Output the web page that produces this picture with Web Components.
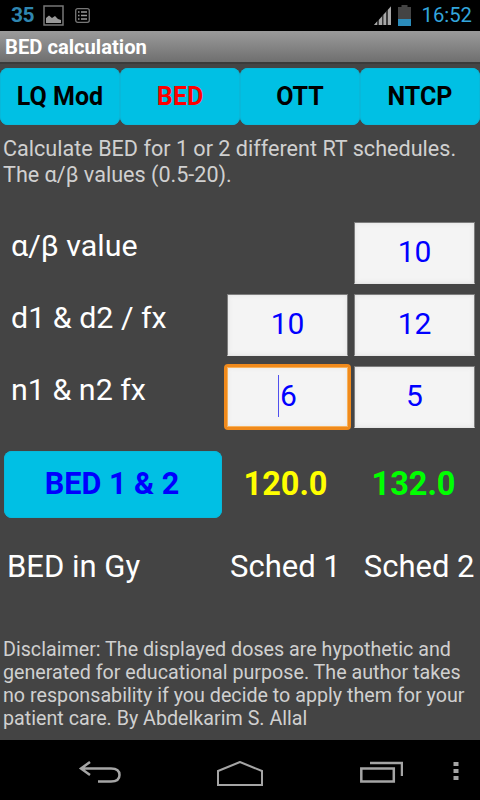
<!DOCTYPE html>
<html>
<head>
<meta charset="utf-8">
<title>BED calculation</title>
<style>
  html, body { margin: 0; padding: 0; background: #444; }
  body { width: 480px; height: 800px; overflow: hidden; font-family: Roboto, sans-serif; }
  bed-app { display: flex; flex-direction: column; height: 800px; }
</style>
</head>
<body>
<bed-app></bed-app>

<script>
class StatusBar extends HTMLElement {
  constructor() {
    super();
    this.attachShadow({mode: 'open'}).innerHTML = `
<style>
  :host { display: flex; height: 31px; background: #000; align-items: center; padding: 0 8px 0 11px; box-sizing: border-box; }
  .count { color: #2f86b0; font: 700 21px/31px Roboto, sans-serif; letter-spacing: -.6px; width: 32px; }
  .time { color: #33a5dc; font: 400 20.3px/31px Roboto, sans-serif; margin-left: 10px; }
  svg { display: block; }
  .notes { margin-left: 11px; }
  .spacer { flex: 1; }
</style>
<span class="count">35</span>
<svg class="pic" width="21" height="21" viewBox="0 0 21 21">
  <rect x="1" y="1" width="19" height="19" fill="none" stroke="#777" stroke-width="1.5"/>
  <path d="M3 18V13L6 10.5 9 13 12 11 15 14 18 15V18Z" fill="#999"/>
</svg>
<svg class="notes" width="15" height="15" viewBox="0 0 15 15">
  <rect x=".7" y=".7" width="13.6" height="13.6" rx="2" fill="none" stroke="#777" stroke-width="1.3"/>
  <path d="M3 4H4.5M6 4H12M3 7.5H4.5M6 7.5H12M3 11H4.5M6 11H12" stroke="#999" stroke-width="1.4"/>
</svg>
<span class="spacer"></span>
<svg width="19" height="21" viewBox="0 0 19 21">
  <path d="M1 20L18 1V20Z" fill="#3a3a3a"/>
  <path d="M1 20L4 16.6V20ZM6 20V14.8L9 11.5V20ZM10.5 20V9.8L13 7V20ZM15 20V4.8L18 1.5V20Z" fill="#a8a8a8"/>
</svg>
<svg class="bat" width="13" height="21" viewBox="0 0 13 21" style="margin-left:6px">
  <rect x="3.5" y="0" width="6" height="2" fill="#444"/>
  <rect x="0" y="2" width="13" height="12" fill="#444"/>
  <rect x="0" y="14" width="13" height="7" fill="#33a5dc" opacity=".85"/>
</svg>
<span class="time">16:52</span>
`;
  }
}

class TitleBar extends HTMLElement {
  constructor() {
    super();
    this.attachShadow({mode: 'open'}).innerHTML = `
<style>
  :host { display: block; height: 31px; padding-left: 5px; background: linear-gradient(#9b9b9b, #6f6f6f); border-bottom: 2px solid #3a3a3a;
    color: #fff; font: 700 20.2px/32px Roboto, sans-serif; white-space: nowrap; }
</style>
<slot></slot>
`;
  }
}

class TabButton extends HTMLElement {
  constructor() {
    super();
    this.attachShadow({mode: 'open'}).innerHTML = `
<style>
  :host { display: flex; flex: 1; height: 57px; align-items: center; justify-content: center; background: #00c0e4; border-radius: 8px;
    box-shadow: inset 0 0 0 1px #08b8da; color: #000; font: 700 25px/1 Roboto, sans-serif; }
  :host([active]) { color: #f00; }
  :host([wide]) { flex: none; width: 218px; height: 67px; padding: 0 2px 1px 0; box-sizing: border-box; color: #00f; font-size: 30.6px; }
</style>
<slot></slot>
`;
  }
}

class NumField extends HTMLElement {
  constructor() {
    super();
    this.attachShadow({mode: 'open'}).innerHTML = `
<style>
  :host { display: flex; box-sizing: border-box; width: 121px; height: 62px; padding-bottom: 2px; align-items: center; justify-content: center; background: #f4f4f4;
    border: 1px solid #7d7d7d; border-bottom-color: #e6e6e6; box-shadow: inset 0 0 5px #e2e2e2; color: #00f; font: 400 30px/1 Roboto, sans-serif; }
  :host([focused]) { width: 127px; height: 66px; margin: -2px -3px; border: 3px solid #f08a1c; border-radius: 4px; box-shadow: inset 0 0 0 1px #f7b25c, inset 0 0 5px #e2e2e2; }
  .caret { display: none; width: 1px; height: 42px; margin-right: 1px; background: #5050ee; }
  :host([focused]) .caret { display: block; }
</style>
<span class="caret"></span><slot></slot>
`;
  }
}

class InputRow extends HTMLElement {
  constructor() {
    super();
    this.attachShadow({mode: 'open'}).innerHTML = `
<style>
  :host { display: grid; grid-template-columns: 1fr 121px 121px; column-gap: 6px; height: 62px; color: #fff; font: 400 30.4px/1 Roboto, sans-serif; }
  .label { padding: 9px 0 0 11px; white-space: nowrap; }
  ::slotted(num-field:last-child) { grid-column: 3; }
</style>
<div class="label"><slot name="label"></slot></div>
<slot></slot>
`;
  }
}

class ResultRow extends HTMLElement {
  constructor() {
    super();
    this.attachShadow({mode: 'open'}).innerHTML = `
<style>
  :host { display: flex; align-items: center; margin: 23px 0 0 4px; height: 67px; font: 700 32.5px/1 Roboto, sans-serif; }
  .a { width: 127px; text-align: center; color: #ff0; }
  .b { width: 129px; text-align: center; color: #0f0; }
</style>
<slot></slot>
<span class="a">120.0</span>
<span class="b">132.0</span>
`;
  }
}

class BedApp extends HTMLElement {
  constructor() {
    super();
    this.attachShadow({mode: 'open'}).innerHTML = `
<style>
  :host { display: flex; flex-direction: column; color: #ddd; font-family: Roboto, sans-serif; }
  .tabs { display: flex; margin-top: 4px; }
  .intro { margin: 11px 0 0 3px; height: 49px; font-size: 21.6px; line-height: 26px; color: #d0d0d0; white-space: nowrap; }
  .inputs { display: flex; flex-direction: column; row-gap: 10px; margin: 37px 5px 0 0; }
  .caption { display: flex; margin: 32px 0 0 7px; color: #fff; font-size: 31px; line-height: 34px; white-space: nowrap; }
  .caption span { flex: none; }
  .caption span:first-child { width: 223px; }
  .caption span:last-child { margin-left: 23px; }
  .disclaimer { margin: 54px 0 0 3px; font-size: 19.7px; line-height: 23px; color: #d0d0d0; white-space: nowrap; }
  .nav { display: flex; margin-top: auto; height: 60px; background: #000; position: relative; }
  .nav svg { position: absolute; top: 21px; }
</style>
<status-bar></status-bar>
<title-bar>BED calculation</title-bar>
<div class="tabs">
  <tab-button>LQ Mod</tab-button>
  <tab-button active>BED</tab-button>
  <tab-button>OTT</tab-button>
  <tab-button>NTCP</tab-button>
</div>
<div class="intro">Calculate BED for 1 or 2 different RT schedules.<br>The α/β values (0.5-20).</div>
<div class="inputs">
  <input-row><span slot="label">α/β value</span><num-field>10</num-field></input-row>
  <input-row><span slot="label">d1 &amp; d2 / fx</span><num-field>10</num-field><num-field>12</num-field></input-row>
  <input-row><span slot="label">n1 &amp; n2 fx</span><num-field focused>6</num-field><num-field>5</num-field></input-row>
</div>
<result-row><tab-button wide>BED 1 &amp; 2</tab-button></result-row>
<div class="caption"><span>BED in Gy</span><span>Sched 1</span><span>Sched 2</span></div>
<div class="disclaimer">Disclaimer: The displayed doses are hypothetic and<br>generated for educational purpose. The author takes<br>no responsability if you decide to apply them for your<br>patient care. By Abdelkarim S. Allal</div>
<div class="nav">
  <svg style="left:78px" width="44" height="24" viewBox="0 0 44 24" fill="none" stroke="#a5a5a5" stroke-width="2.5"><path d="M12 1L3 7.5 12 14M3 7.5H33Q41.500 7.500 41.500 14T33 20.500H20"/></svg>
  <svg style="left:216px" width="48" height="26" viewBox="0 0 48 26" fill="none" stroke="#a5a5a5" stroke-width="2"><path d="M24 1L2 10V24H46V10Z"/></svg>
  <svg style="left:359px" width="44" height="24" viewBox="0 0 44 24" fill="none" stroke="#a5a5a5" stroke-width="2.5"><path d="M2.300 7.500H34.800V20.500H2.300ZM11 2H43V15"/></svg>
  <svg style="left:453px" width="6" height="20" viewBox="0 0 6 20" fill="#a5a5a5"><rect width="5" height="4" x="0.5" y="1"/><rect width="5" height="4" x="0.5" y="8"/><rect width="5" height="4" x="0.5" y="15"/></svg>
</div>
`;
  }
}

customElements.define('status-bar', StatusBar);
customElements.define('title-bar', TitleBar);
customElements.define('tab-button', TabButton);
customElements.define('num-field', NumField);
customElements.define('input-row', InputRow);
customElements.define('result-row', ResultRow);
customElements.define('bed-app', BedApp);
</script>
</body>
</html>
